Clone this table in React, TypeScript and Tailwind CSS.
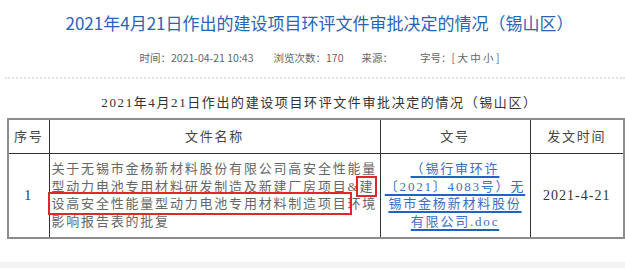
const sans = "font-['Noto_Sans_CJK_SC','Liberation_Sans',sans-serif]";
const serif = "font-['Liberation_Serif','Noto_Sans_CJK_SC',serif]";

const nameLines = [
  "关于无锡市金杨新材料股份有限公司高安全性能量",
];

const docLines = ["（锡行审环许", "〔2021〕4083号）无", "锡市金杨新材料股份", "有限公司.doc"];

export default function App() {
  return (
    <div className="flex h-[268px] w-[625px] flex-col overflow-hidden bg-white">
      {/* 标题区 */}
      <div className="pl-[14px]">
        <h1 className={`${sans} pt-[11px] text-center text-[17px] leading-[24px] text-[#2b63b5]`}>
          2021年4月21日作出的建设项目环评文件审批决定的情况（锡山区）
        </h1>
        <div className={`${sans} mt-[16px] flex justify-center text-[10.5px] leading-[14px] text-[#666]`}>
          <span>时间：2021-04-21 10:43</span>
          <span className="ml-[20px]">浏览次数：170</span>
          <span className="ml-[18px]">来源：</span>
          <span className="ml-[27px]">字号：[ 大 中 小 ]</span>
        </div>
      </div>
      <div className="ml-[5px] mt-[12px] border-t-2 border-dotted border-[#e2e2e2]" />

      {/* 正文表格 */}
      <p className={`${serif} mt-[15px] pl-[14px] text-center text-[13px] leading-[18px] tracking-[1.6px] text-[#333]`}>
        2021年4月21日作出的建设项目环评文件审批决定的情况（锡山区）
      </p>
      <table className={`${serif} ml-[7px] mt-[6px] w-[616px] table-fixed border-collapse border-2 border-[#8c8c8c] text-[13px] tracking-[1.8px]`}>
        <colgroup>
          <col className="w-[41px]" />
          <col className="w-[331px]" />
          <col className="w-[150px]" />
          <col className="w-[94px]" />
        </colgroup>
        <thead>
          <tr className="h-[34px] text-[#444]">
            <th className="border border-[#333] font-normal">序号</th>
            <th className="border border-[#333] font-normal">文件名称</th>
            <th className="border border-[#333] font-normal">文号</th>
            <th className="border border-[#333] font-normal">发文时间</th>
          </tr>
        </thead>
        <tbody>
          <tr className="h-[85px]">
            <td className="border border-[#333] text-center text-[14px] text-[#333]">1</td>
            <td className="border border-[#333] px-[2px] text-left leading-[17.7px] text-[#666]">
              {nameLines.map((line) => (
                <div key={line} className="whitespace-nowrap">{line}</div>
              ))}
              <div className="whitespace-nowrap">
                型动力电池专用材料研发制造及新建厂房项目&amp;
                <span className="outline-2 outline-offset-[1px] outline-solid outline-[#e3262b]">建</span>
              </div>
              <div className="whitespace-nowrap">
                <span className="outline-2 outline-offset-[2px] outline-solid outline-[#e3262b]">
                  设高安全性能量型动力电池专用材料制造项目
                </span>
                环境
              </div>
              <div className="whitespace-nowrap">影响报告表的批复</div>
            </td>
            <td className="border border-[#333] text-center leading-[17.7px]">
              {docLines.map((line) => (
                <div key={line} className="whitespace-nowrap">
                  <a className="text-[#3a6fc4] underline decoration-[#2362c4] decoration-2 underline-offset-[3px]">
                    {line}
                  </a>
                </div>
              ))}
            </td>
            <td className="border border-[#333] text-center text-[14px] tracking-[1px] text-[#333]">2021-4-21</td>
          </tr>
        </tbody>
      </table>
      <div className="mt-auto h-[6px] bg-[#f2f3f5]" />
    </div>
  );
}
